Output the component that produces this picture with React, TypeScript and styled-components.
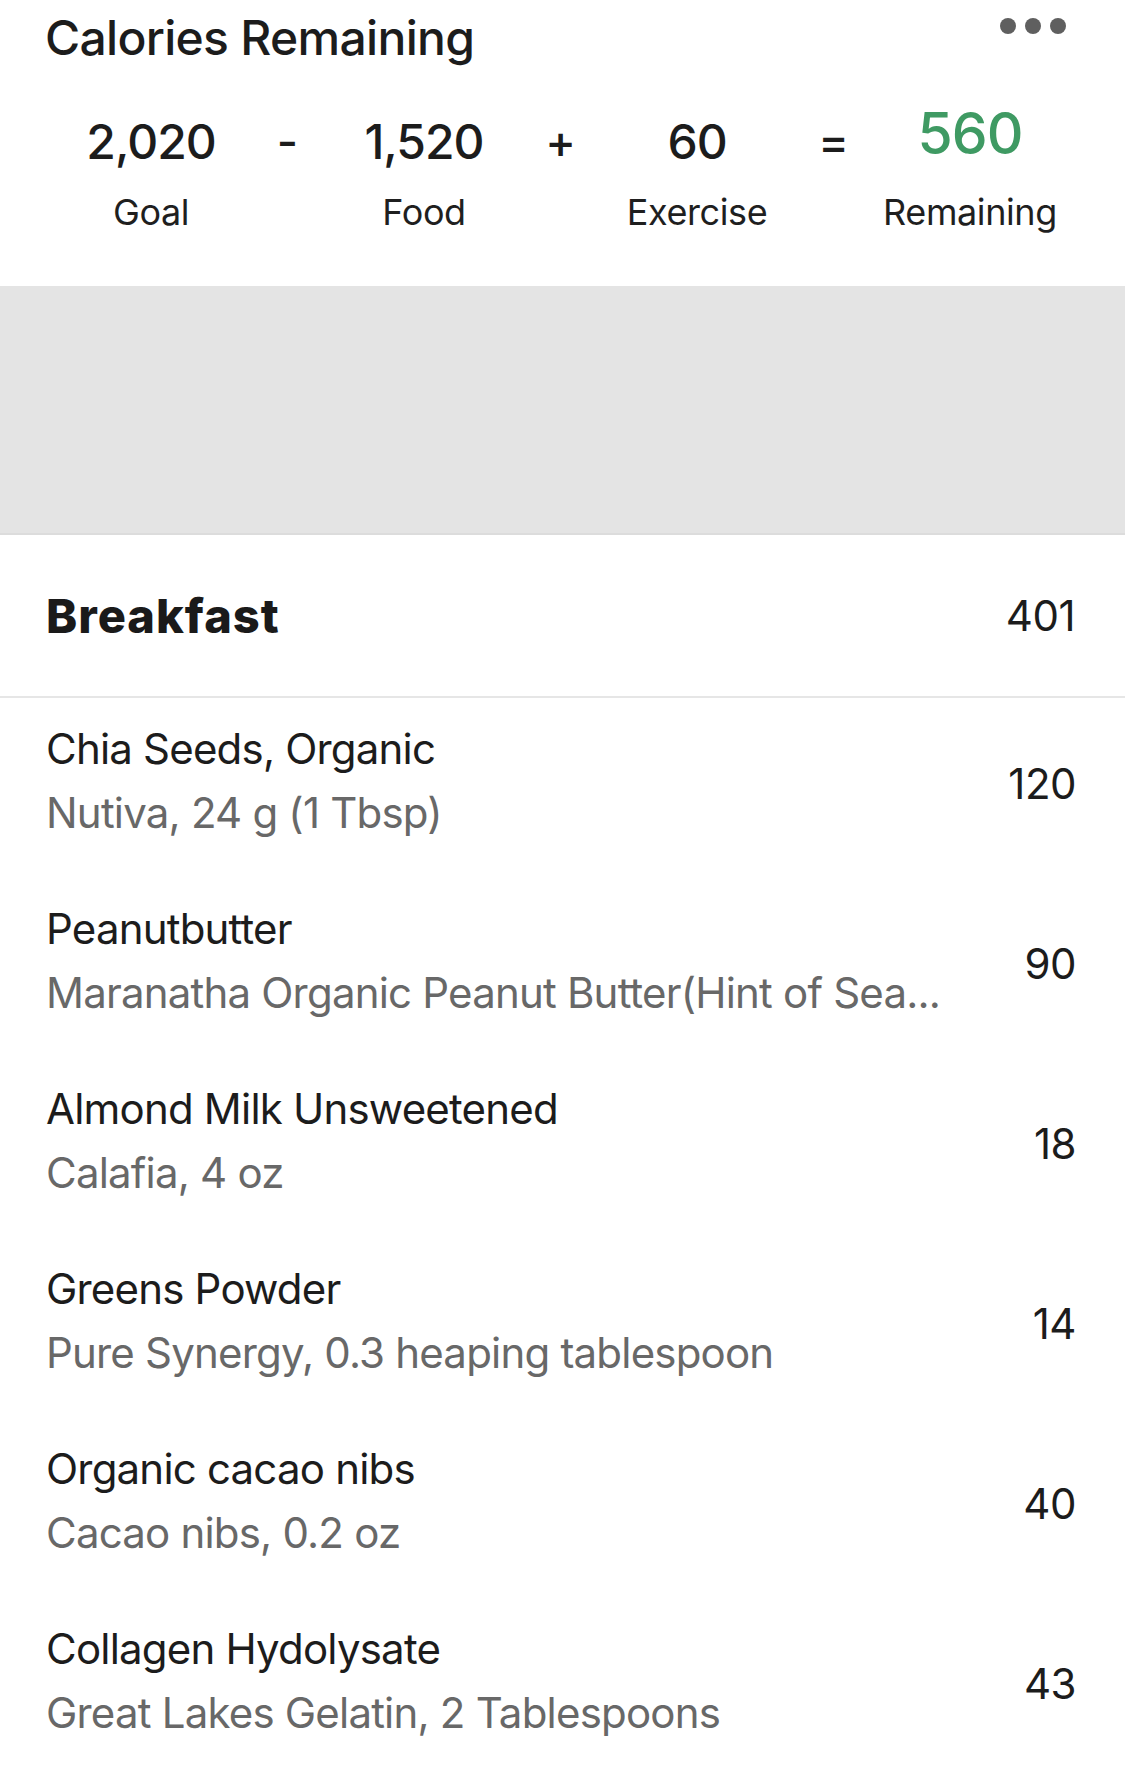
import React from 'react';
import styled, { createGlobalStyle } from 'styled-components';

const GlobalStyle = createGlobalStyle`
  html, body {
    margin: 0;
    padding: 0;
    background: #ffffff;
  }
  body {
    font-family: Inter, "Noto Sans", "Liberation Sans", sans-serif;
    color: #1d1d1d;
    -webkit-font-smoothing: antialiased;
  }
  * {
    box-sizing: border-box;
  }
`;

const Page = styled.div`
  width: 1125px;
  min-height: 1787px;
  background: #ffffff;
  display: flex;
  flex-direction: column;
`;

const Summary = styled.section`
  height: 286px;
  padding: 8px 59px 0 45px;
  display: flex;
  flex-direction: column;
`;

const SummaryTop = styled.div`
  display: flex;
  justify-content: space-between;
  align-items: flex-start;
`;

const Title = styled.h1`
  margin: 0;
  font-size: 48px;
  font-weight: 500;
  letter-spacing: -0.7px;
  color: #1c1c1c;
`;

const MoreButton = styled.button`
  margin-top: 10px;
  padding: 0;
  border: none;
  background: none;
  display: flex;
  gap: 9px;
  cursor: pointer;
`;

const Dot = styled.span`
  width: 16px;
  height: 16px;
  border-radius: 50%;
  background: #5f5f5f;
`;

const Equation = styled.div`
  margin-top: 42px;
  margin-left: 11px;
  display: grid;
  grid-template-columns: 190px 83px 190px 83px 190px 83px 190px;
`;

const Term = styled.div`
  display: flex;
  flex-direction: column;
  align-items: center;
`;

const TermValue = styled.div<{ $accent?: boolean }>`
  height: 64px;
  display: flex;
  align-items: center;
  justify-content: center;
  font-size: ${(p) => (p.$accent ? '57px' : '48px')};
  font-weight: 500;
  letter-spacing: -1px;
  color: ${(p) => (p.$accent ? '#3f9a63' : '#1c1c1c')};
  margin-top: ${(p) => (p.$accent ? '-8px' : '0')};
  margin-bottom: ${(p) => (p.$accent ? '8px' : '0')};
`;

const TermLabel = styled.div`
  margin-top: 17px;
  font-size: 36px;
  font-weight: 400;
  letter-spacing: -0.4px;
  color: #1f1f1f;
`;

const Operator = styled.div`
  height: 64px;
  display: flex;
  align-items: center;
  justify-content: center;
  font-size: 46px;
  font-weight: 500;
  color: #1c1c1c;
`;

const Band = styled.div`
  height: 249px;
  background: #e4e4e4;
  border-bottom: 2px solid #dcdcdc;
`;

const MealHeader = styled.div`
  height: 163px;
  padding: 0 50px 0 46px;
  display: flex;
  align-items: center;
  justify-content: space-between;
  border-bottom: 2px solid #e6e6e6;
`;

const MealName = styled.h2`
  margin: 0;
  font-size: 47px;
  font-weight: 800;
  letter-spacing: 1px;
  color: #1a1a1a;
`;

const MealTotal = styled.span`
  font-size: 42px;
  font-weight: 400;
  letter-spacing: -0.5px;
  color: #1c1c1c;
`;

const FoodRow = styled.div`
  height: 180px;
  padding: 25px 49px 40px 46px;
  display: flex;
  align-items: center;
`;

const FoodText = styled.div`
  flex: 1;
  min-width: 0;
  display: flex;
  flex-direction: column;
  gap: 13px;
`;

const FoodName = styled.div`
  font-size: 42px;
  font-weight: 400;
  letter-spacing: -0.8px;
  color: #1c1c1c;
  white-space: nowrap;
`;

const FoodDetail = styled.div`
  font-size: 42px;
  font-weight: 400;
  letter-spacing: -0.8px;
  color: #686868;
  white-space: nowrap;
  overflow: hidden;
  text-overflow: ellipsis;
`;

const FoodCalories = styled.span`
  flex: none;
  margin-left: 40px;
  margin-top: 6px;
  font-size: 42px;
  font-weight: 400;
  letter-spacing: -0.5px;
  color: #1c1c1c;
`;

const terms = [
  { value: '2,020', label: 'Goal', op: '-' },
  { value: '1,520', label: 'Food', op: '+' },
  { value: '60', label: 'Exercise', op: '=' },
  { value: '560', label: 'Remaining', accent: true },
];

const foods = [
  { name: 'Chia Seeds, Organic', detail: 'Nutiva, 24 g (1 Tbsp)', cal: 120 },
  { name: 'Peanutbutter', detail: 'Maranatha Organic Peanut Butter(Hint of Sea...', cal: 90 },
  { name: 'Almond Milk Unsweetened', detail: 'Calafia, 4 oz', cal: 18 },
  { name: 'Greens Powder', detail: 'Pure Synergy, 0.3 heaping tablespoon', cal: 14 },
  { name: 'Organic cacao nibs', detail: 'Cacao nibs, 0.2 oz', cal: 40 },
  { name: 'Collagen Hydolysate', detail: 'Great Lakes Gelatin, 2 Tablespoons', cal: 43 },
];

const App: React.FC = () => {
  return (
    <Page>
      <GlobalStyle />
      <Summary>
        <SummaryTop>
          <Title>Calories Remaining</Title>
          <MoreButton aria-label="More">
            <Dot />
            <Dot />
            <Dot />
          </MoreButton>
        </SummaryTop>
        <Equation>
          {terms.map((t) => (
            <React.Fragment key={t.label}>
              <Term>
                <TermValue $accent={t.accent}>{t.value}</TermValue>
                <TermLabel>{t.label}</TermLabel>
              </Term>
              {t.op && <Operator>{t.op}</Operator>}
            </React.Fragment>
          ))}
        </Equation>
      </Summary>
      <Band />
      <MealHeader>
        <MealName>Breakfast</MealName>
        <MealTotal>401</MealTotal>
      </MealHeader>
      {foods.map((f) => (
        <FoodRow key={f.name}>
          <FoodText>
            <FoodName>{f.name}</FoodName>
            <FoodDetail>{f.detail}</FoodDetail>
          </FoodText>
          <FoodCalories>{f.cal}</FoodCalories>
        </FoodRow>
      ))}
    </Page>
  );
};

export default App;
